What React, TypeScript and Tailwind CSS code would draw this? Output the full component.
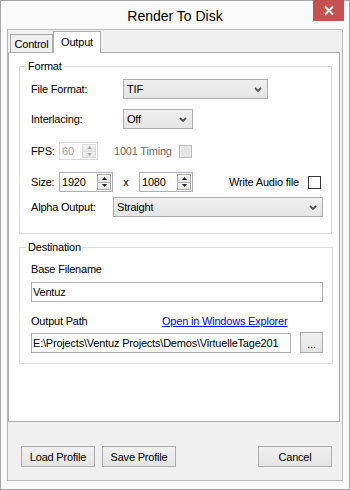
import React from "react";

function Chevron() {
  return (
    <svg width="8" height="5" viewBox="0 0 8 5">
      <path d="M1 1 L4 4 L7 1" stroke="#555" strokeWidth="1.8" fill="none" />
    </svg>
  );
}

function Select({ w, text }: { w: string; text: string }) {
  return (
    <div
      className={`flex h-[20px] items-center justify-between border border-[#acacac] bg-linear-to-b from-[#f0f0f0] to-[#e5e5e5] pl-[3px] pr-[5px] ${w}`}
    >
      <span>{text}</span>
      <Chevron />
    </div>
  );
}

function Tri({ up, color }: { up: boolean; color: string }) {
  return (
    <svg width="5" height="3" viewBox="0 0 5 3">
      <path d={up ? "M0 3 L2.5 0 L5 3Z" : "M0 0 L2.5 3 L5 0Z"} fill={color} />
    </svg>
  );
}

function Spin({ w, value, disabled }: { w: string; value: string; disabled?: boolean }) {
  const tri = disabled ? "#a8a8a8" : "#222";
  return (
    <div
      className={`flex h-full ${w} border bg-white ${disabled ? "border-[#d9d9d9] text-[#a0a0a0]" : "border-[#abadb3]"}`}
    >
      <div className="flex flex-1 items-center pl-[2px]">{value}</div>
      <div className="my-[1px] mr-[1px] flex w-[14px] flex-col">
        <div
          className={`flex flex-1 items-center justify-center border bg-linear-to-b from-[#f2f2f2] to-[#e6e6e6] ${disabled ? "border-[#d9d9d9]" : "border-[#acacac]"}`}
        >
          <Tri up color={tri} />
        </div>
        <div
          className={`-mt-[1px] flex flex-1 items-center justify-center border bg-linear-to-b from-[#f2f2f2] to-[#e6e6e6] ${disabled ? "border-[#d9d9d9]" : "border-[#acacac]"}`}
        >
          <Tri up={false} color={tri} />
        </div>
      </div>
    </div>
  );
}

function Btn({ children, className = "" }: { children: React.ReactNode; className?: string }) {
  return (
    <div
      className={`flex h-[21px] w-[74px] items-center justify-center border border-[#acacac] bg-linear-to-b from-[#f0f0f0] to-[#e5e5e5] ${className}`}
    >
      {children}
    </div>
  );
}

export default function App() {
  return (
    <div className="relative flex h-[490px] w-[350px] flex-col border border-[#a5a5a5] bg-[#fafafa] font-['Liberation_Sans',Arial,sans-serif] text-[11px] leading-[16px] tracking-[-0.2px] text-black">
      {/* Title bar */}
      <div className="relative flex h-[28px] shrink-0 items-center justify-center pt-[1px] text-[14px] tracking-normal">
        Render To Disk
        <div className="absolute right-[5px] top-[-1px] flex h-[21px] w-[31px] items-center justify-center bg-[#c75050]">
          <svg width="10" height="9" viewBox="0 0 10 9">
            <path d="M1 0.5 L9 8.5 M9 0.5 L1 8.5" stroke="#fff" strokeWidth="2" />
          </svg>
        </div>
      </div>

      {/* Client */}
      <div className="mx-[6px] flex h-[452px] shrink-0 flex-col border border-[#b9b9b9] bg-[#f0f0f0]">
        {/* Tabs */}
        <div className="mt-[1px] flex h-[21px] items-end pl-[2px]">
          <div className="flex h-[18px] w-[43px] items-center justify-center border border-b-0 border-[#acacac] bg-[#f0f0f0]">
            Control
          </div>
          <div className="relative z-10 mb-[-1px] flex h-[22px] w-[48px] items-center justify-center border border-b-0 border-[#acacac] bg-white pb-[2px]">
            Output
          </div>
        </div>

        {/* Panel */}
        <div className="mr-[2px] h-[370px] border border-[#acacac] bg-white">
          <fieldset className="ml-[10px] mr-[7px] mt-[5px] border border-[#dcdcdc]">
            <legend className="ml-[6px] px-[2px] leading-[16px]">Format</legend>
            <div className="pl-[11px] pt-[5px] pb-[16px]">
              <div className="flex h-[20px] items-center">
                <div className="w-[92px]">File Format:</div>
                <Select w="w-[145px]" text="TIF" />
              </div>
              <div className="mt-[10px] flex h-[20px] items-center">
                <div className="w-[92px]">Interlacing:</div>
                <Select w="w-[70px]" text="Off" />
              </div>
              <div className="mt-[13px] flex h-[18px] items-center">
                <div className="w-[28px]">FPS:</div>
                <Spin w="w-[39px]" value="60" disabled />
                <div className="ml-[16px] w-[65px] text-[#6d6d6d]">1001 Timing</div>
                <div className="h-[13px] w-[13px] border border-[#bcbcbc] bg-[#e6e6e6]" />
              </div>
              <div className="mt-[12px] flex h-[20px] items-center">
                <div className="w-[28px]">Size:</div>
                <Spin w="w-[54px]" value="1920" />
                <div className="w-[26px] text-center">x</div>
                <Spin w="w-[54px]" value="1080" />
                <div className="ml-auto mr-[10px] flex items-center">
                  <span>Write Audio file</span>
                  <div className="ml-[9px] h-[13px] w-[13px] border border-[#333] bg-white" />
                </div>
              </div>
              <div className="mt-[5px] flex h-[20px] items-center">
                <div className="w-[82px]">Alpha Output:</div>
                <Select w="w-[210px]" text="Straight" />
              </div>
            </div>
          </fieldset>

          <fieldset className="ml-[10px] mr-[7px] mt-[5px] border border-[#dcdcdc]">
            <legend className="ml-[6px] px-[2px] leading-[16px]">Destination</legend>
            <div className="pl-[11px] pr-[9px] pt-[6px] pb-[10px]">
              <div>Base Filename</div>
              <div className="mt-[5px] flex h-[20px] items-center border border-[#abadb3] bg-white pl-[1px]">
                Ventuz
              </div>
              <div className="mt-[11px] flex">
                <div className="w-[131px]">Output Path</div>
                <span className="text-[#0000ff] underline">Open in Windows Explorer</span>
              </div>
              <div className="mt-[3px] flex items-start">
                <div className="mt-[1px] flex h-[20px] w-[260px] items-center overflow-hidden whitespace-nowrap border border-[#abadb3] bg-white pl-[1px]">
                  E:\Projects\Ventuz Projects\Demos\VirtuelleTage201
                </div>
                <div className="ml-[9px] flex h-[21px] w-[23px] items-center justify-center border border-[#acacac] bg-linear-to-b from-[#f0f0f0] to-[#e5e5e5] pt-[2px]">
                  ...
                </div>
              </div>
            </div>
          </fieldset>
        </div>

        {/* Buttons */}
        <div className="mt-[24px] flex pl-[13px] pr-[10px]">
          <Btn>Load Profile</Btn>
          <Btn className="ml-[7px]">Save Profile</Btn>
          <Btn className="ml-auto">Cancel</Btn>
        </div>
      </div>
    </div>
  );
}
